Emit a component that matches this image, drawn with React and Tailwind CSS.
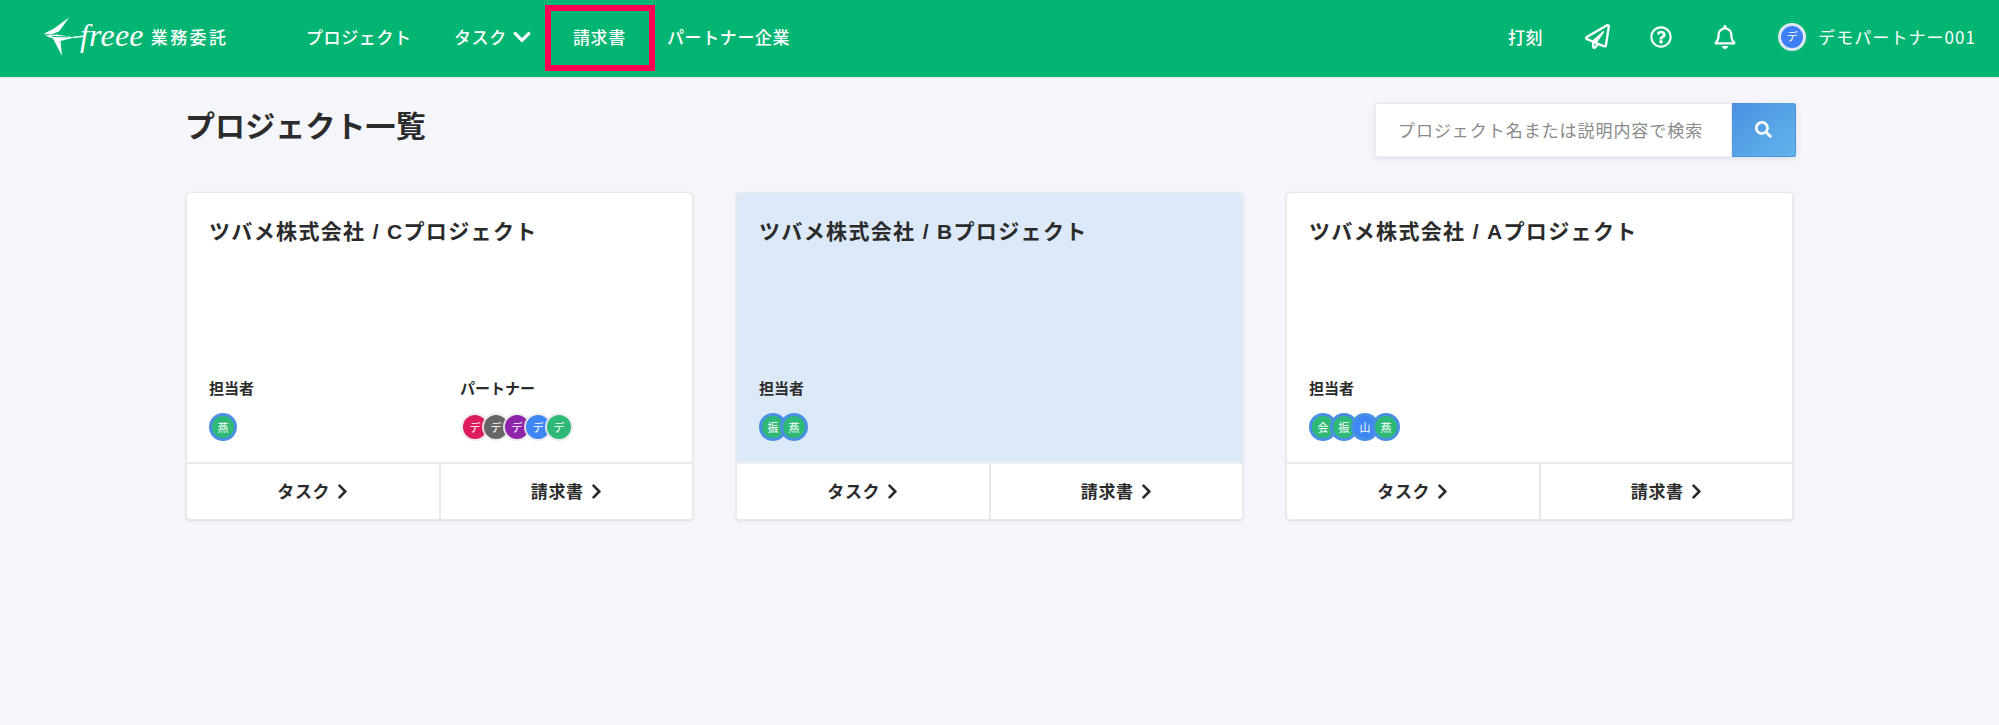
import React from "react";
import {
  FaChevronDown,
  FaChevronRight,
  FaRegBell,
  FaRegPaperPlane,
  FaRegQuestionCircle,
  FaSearch,
} from "react-icons/fa";

const FONT = "font-['Noto_Sans_CJK_JP','Noto_Sans',sans-serif]";

const PARTNERS = [
  { bg: "bg-[#dd1b5e]" },
  { bg: "bg-[#666666]" },
  { bg: "bg-[#8e24aa]" },
  { bg: "bg-[#3f86f5]" },
  { bg: "bg-[#2fb977]" },
];

const PROJECTS = [
  {
    name: "ツバメ株式会社 / Cプロジェクト",
    staff: [{ label: "燕", bg: "bg-[#2fb977]" }],
    partners: true,
  },
  {
    name: "ツバメ株式会社 / Bプロジェクト",
    active: true,
    staff: [
      { label: "振", bg: "bg-[#2fb977]" },
      { label: "燕", bg: "bg-[#2fb977]" },
    ],
  },
  {
    name: "ツバメ株式会社 / Aプロジェクト",
    staff: [
      { label: "会", bg: "bg-[#2fb977]" },
      { label: "振", bg: "bg-[#2fb977]" },
      { label: "山", bg: "bg-[#3f86f5]" },
      { label: "燕", bg: "bg-[#2fb977]" },
    ],
  },
];

function Logo() {
  return (
    <div className="flex items-center text-white">
      {/* swallow mark, with the dash running into the wordmark */}
      <svg width="45" height="40" viewBox="13 9 45 40" className="mr-[-8px]">
        <path d="M39 9.5 L24 20.5 L13.5 26 L21 26.5 L29 23.5 L33 18 Z" fill="white" />
        <path d="M15 27.5 L23 30.5 L32 48 L30.5 33 L44 29.5 L27 26.5 Z" fill="white" />
        <path d="M22 28.5 L38 29" stroke="#03b573" strokeWidth="1.2" fill="none" />
        <path d="M43 29.5 L55 28" stroke="white" strokeWidth="1.4" fill="none" />
      </svg>
      <span className="font-['Liberation_Serif',serif] italic text-[32px] leading-none tracking-[0.2px] mt-[-3px]">
        freee
      </span>
      <span className="ml-[7px] text-[17px] font-medium tracking-[2.4px]">業務委託</span>
    </div>
  );
}

function Header() {
  return (
    <header className="h-[77px] bg-[#03b573] flex items-center pl-[43px] pr-[23px] pb-[4px] text-white shadow-[0_1px_2px_rgba(0,0,0,0.08)]">
      <div className="w-[263px]">
        <Logo />
      </div>
      <nav className="flex items-center text-[17px] font-medium tracking-[0.6px]">
        <a className="w-[148px]">プロジェクト</a>
        <a className="w-[119px] flex items-center">
          タスク
          <FaChevronDown className="ml-[5px] text-[20px]" />
        </a>
        <a className="relative w-[94px]">
          請求書
          <span className="absolute left-[-28px] top-[-19px] w-[110px] h-[66px] border-[6px] border-[#ff0055]" />
        </a>
        <a>パートナー企業</a>
      </nav>
      <div className="ml-auto flex items-center">
        <span className="text-[17px] font-medium tracking-[0.6px]">打刻</span>
        <FaRegPaperPlane className="ml-[42px] text-[25px]" />
        <FaRegQuestionCircle className="ml-[40px] text-[22px]" />
        <FaRegBell className="ml-[41px] text-[24px]" />
        <div className="ml-[41px] w-[28px] h-[28px] rounded-full bg-[#3f7ff5] border-[3px] border-[#dfe8f5] flex items-center justify-center text-[11px]">
          デ
        </div>
        <span className="ml-[12px] text-[17px] tracking-[1.05px]">デモパートナー001</span>
      </div>
    </header>
  );
}

function SearchBox() {
  return (
    <div className="flex h-[54px] w-[421px] rounded-[3px] shadow-[0_2px_6px_rgba(60,80,120,0.12)]">
      <div className="flex-1 bg-white border border-[#e8ebf0] flex items-center pl-[22px] text-[17px] text-[#8a8a8a] tracking-[0.95px] whitespace-nowrap overflow-hidden">
        プロジェクト名または説明内容で検索
      </div>
      <button className="w-[64px] rounded-r-[3px] bg-gradient-to-br from-[#4c90e2] to-[#62b4eb] border-b border-r border-[#4c90e2] flex items-center justify-center text-white">
        <FaSearch className="text-[17px]" />
      </button>
    </div>
  );
}

function StaffAvatar({ label, bg }) {
  return (
    <div
      className={`w-[28px] h-[28px] -mr-[7px] rounded-full border-[3px] border-[#4a90e2] ${bg} flex items-center justify-center text-white text-[11px] leading-none relative`}
    >
      {label}
    </div>
  );
}

function PartnerAvatar({ bg }) {
  return (
    <div
      className={`w-[24px] h-[24px] -mr-[3px] rounded-full ${bg} flex items-center justify-center text-white text-[11px] leading-none relative shadow-[0_0_0_2px_rgba(235,235,238,0.9)]`}
    >
      デ
    </div>
  );
}

function FooterLink({ label, divider }) {
  return (
    <a
      className={`flex-1 flex items-center justify-center text-[17px] font-bold text-[#2b2b2b] tracking-[0.6px] pb-[2px] pl-[3px] ${
        divider ? "border-r-2 border-[#e6e8ec]" : ""
      }`}
    >
      {label}
      <FaChevronRight className="ml-[4px] mt-[2px] text-[17px]" />
    </a>
  );
}

function ProjectCard({ project }) {
  return (
    <div className="h-[328px] rounded-[4px] bg-white border border-[#e6e8ec] shadow-[0_1px_3px_rgba(60,70,90,0.14)] flex flex-col overflow-hidden">
      <div
        className={`flex-1 flex flex-col px-[22px] pt-[23px] pb-[21px] ${
          project.active ? "bg-[#dce9f9]" : ""
        }`}
      >
        <h2 className="font-['Liberation_Sans','Noto_Sans_CJK_JP',sans-serif] text-[21px] font-bold text-[#2b2b2b] leading-[32px] tracking-[1.35px]">
          {project.name}
        </h2>
        <div className="mt-auto flex">
          <div className="w-[251px]">
            <div className="text-[15px] font-bold text-[#2b2b2b] leading-[20px] mb-[15px]">担当者</div>
            <div className="flex h-[28px] items-center">
              {project.staff.map((s, i) => (
                <StaffAvatar key={i} label={s.label} bg={s.bg} />
              ))}
            </div>
          </div>
          {project.partners && (
            <div>
              <div className="text-[15px] font-bold text-[#2b2b2b] leading-[20px] mb-[15px]">パートナー</div>
              <div className="flex h-[28px] items-center pl-[3px]">
                {PARTNERS.map((p, i) => (
                  <PartnerAvatar key={i} bg={p.bg} />
                ))}
              </div>
            </div>
          )}
        </div>
      </div>
      <div className={`h-[57px] flex bg-white border-t-2 ${project.active ? "border-[#eef0f3]" : "border-[#e6e8ec]"}`}>
        <FooterLink label="タスク" divider />
        <FooterLink label="請求書" />
      </div>
    </div>
  );
}

export default function App() {
  return (
    <div className={`min-h-[725px] bg-[#f5f6fb] ${FONT}`}>
      <Header />
      <main className="pl-[186px] pt-[26px]">
        <div className="w-[1610px] flex items-start justify-between">
          <h1 className="text-[30px] font-bold text-[#2b2b2b] leading-[44px] mt-[-1px] ml-[-1px] tracking-[0.1px]">プロジェクト一覧</h1>
          <SearchBox />
        </div>
        <div className="mt-[35px] w-[1607px] grid grid-cols-3 gap-[43px]">
          {PROJECTS.map((p) => (
            <ProjectCard key={p.name} project={p} />
          ))}
        </div>
      </main>
    </div>
  );
}
